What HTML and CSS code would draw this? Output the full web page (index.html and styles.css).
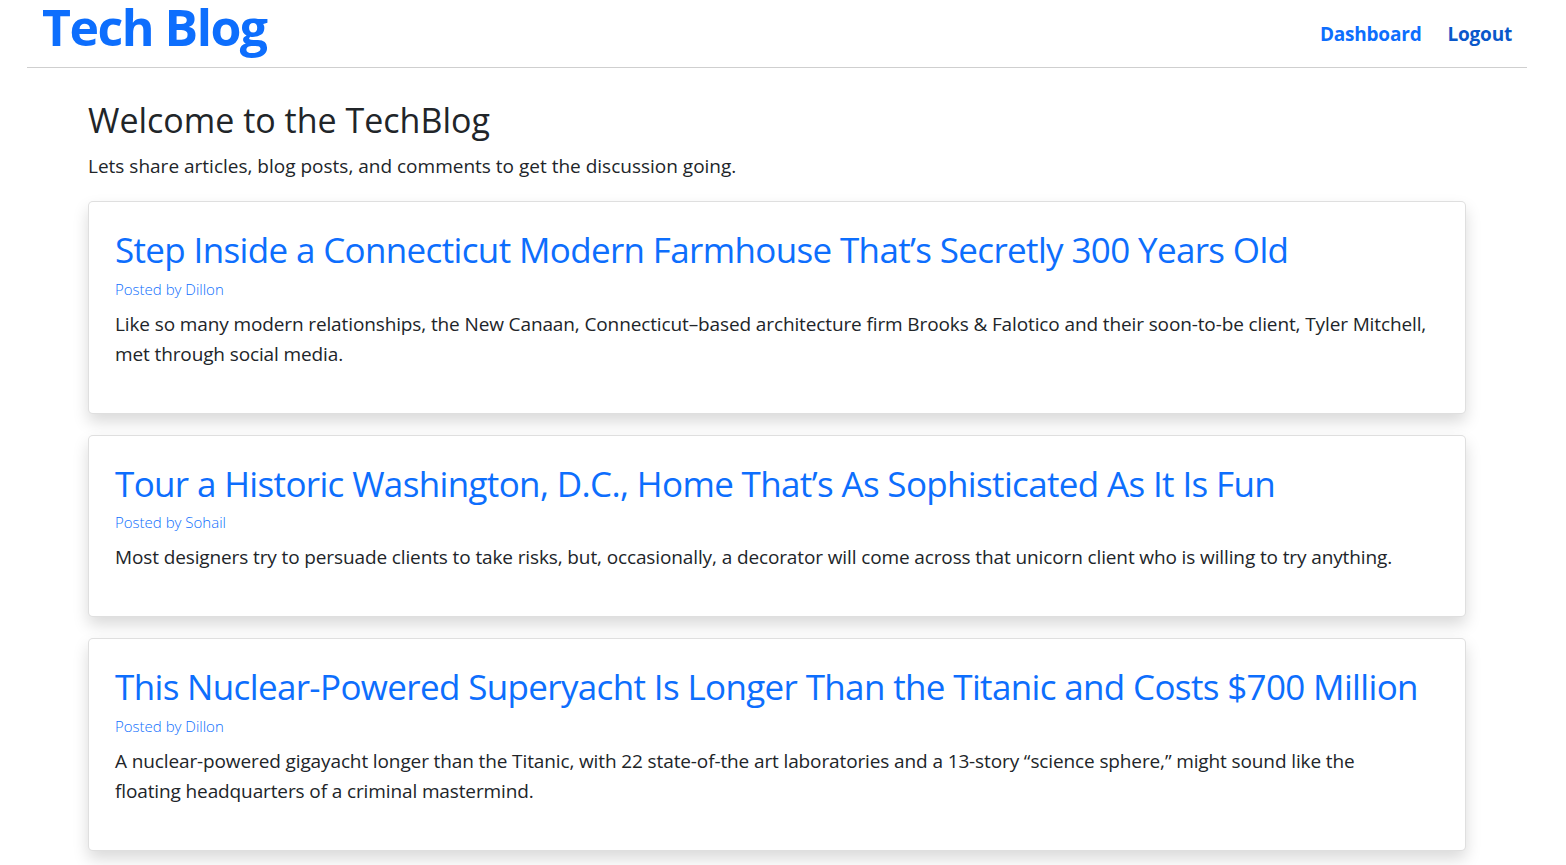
FILE: index.html
```html
<!DOCTYPE html>
<html lang="en">
<head>
<meta charset="utf-8">
<title>Tech Blog</title>
<link rel="stylesheet" href="styles.css">
</head>
<body>
<header class="site-header">
  <a class="brand" href="#">Tech Blog</a>
  <nav class="nav">
    <a class="nav-link" href="#">Dashboard</a>
    <a class="nav-link nav-link-active" href="#">Logout</a>
  </nav>
</header>
<main class="main">
  <section class="intro">
    <h2 class="intro-title">Welcome to the TechBlog</h2>
    <p class="intro-text">Lets share articles, blog posts, and comments to get the discussion going.</p>
  </section>
  <article class="card">
    <h1 class="card-title"><a href="#">Step Inside a Connecticut Modern Farmhouse That’s Secretly 300 Years Old</a></h1>
    <p class="card-meta">Posted by Dillon</p>
    <p class="card-text">Like so many modern relationships, the New Canaan, Connecticut–based architecture firm Brooks &amp; Falotico and their soon-to-be client, Tyler Mitchell, met through social media.</p>
  </article>
  <article class="card">
    <h1 class="card-title"><a href="#">Tour a Historic Washington, D.C., Home That’s As Sophisticated As It Is Fun</a></h1>
    <p class="card-meta">Posted by Sohail</p>
    <p class="card-text">Most designers try to persuade clients to take risks, but, occasionally, a decorator will come across that unicorn client who is willing to try anything.</p>
  </article>
  <article class="card">
    <h1 class="card-title"><a href="#">This Nuclear-Powered Superyacht Is Longer Than the Titanic and Costs $700 Million</a></h1>
    <p class="card-meta">Posted by Dillon</p>
    <p class="card-text">A nuclear-powered gigayacht longer than the Titanic, with 22 state-of-the art laboratories and a 13-story “science sphere,” might sound like the <span class="keep">floating headquarters</span> of a criminal mastermind.</p>
  </article>
</main>
</body>
</html>
```

FILE: styles.css
```css
* { box-sizing: border-box; }
html, body { margin: 0; padding: 0; }
body {
  font-family: "Open Sans", "Noto Sans", sans-serif;
  color: #212529;
  background: #fff;
}
a { text-decoration: none; color: #0d6efd; }

.site-header {
  display: flex;
  justify-content: space-between;
  align-items: center;
  width: 1500px;
  height: 68px;
  margin-left: 27px;
  padding: 0 15px;
  border-bottom: 1px solid #cfcfcf;
}
.brand {
  align-self: flex-start;
  font-size: 50px;
  font-weight: 700;
  letter-spacing: -1.5px;
  line-height: 54px;
  color: #0d6efd;
}
.nav {
  display: flex;
  gap: 26px;
  align-items: center;
}
.nav-link {
  font-size: 19px;
  font-weight: 700;
  letter-spacing: -0.2px;
  color: #0d6efd;
}
.nav-link-active { color: #0a58ca; }

.main {
  width: 1378px;
  margin-left: 88px;
  padding-bottom: 20px;
}
.intro { padding-top: 32px; }
.intro-title {
  margin: 0;
  font-size: 34px;
  font-weight: 500;
  line-height: 40px;
  letter-spacing: 0;
}
.intro-text {
  margin: 12px 0 21px;
  font-size: 19px;
  line-height: 28px;
}
.card {
  background: #fff;
  border: 1px solid rgba(0, 0, 0, 0.125);
  border-radius: 5px;
  box-shadow: 0 0.5rem 1rem rgba(0, 0, 0, 0.15);
  padding: 25px 26px 28px;
  margin-bottom: 21px;
}
.card-title {
  margin: 0 0 6px;
  font-size: 35px;
  font-weight: 500;
  line-height: 1.3;
  letter-spacing: -0.65px;
  white-space: nowrap;
}
.card-meta {
  margin: 0 0 10px;
  font-size: 15px;
  font-weight: 300;
  color: #0d6efd;
}
.card-text {
  margin: 0 0 16px;
  font-size: 19px;
  line-height: 30px;
  letter-spacing: -0.12px;
}
.keep { white-space: nowrap; }
```
